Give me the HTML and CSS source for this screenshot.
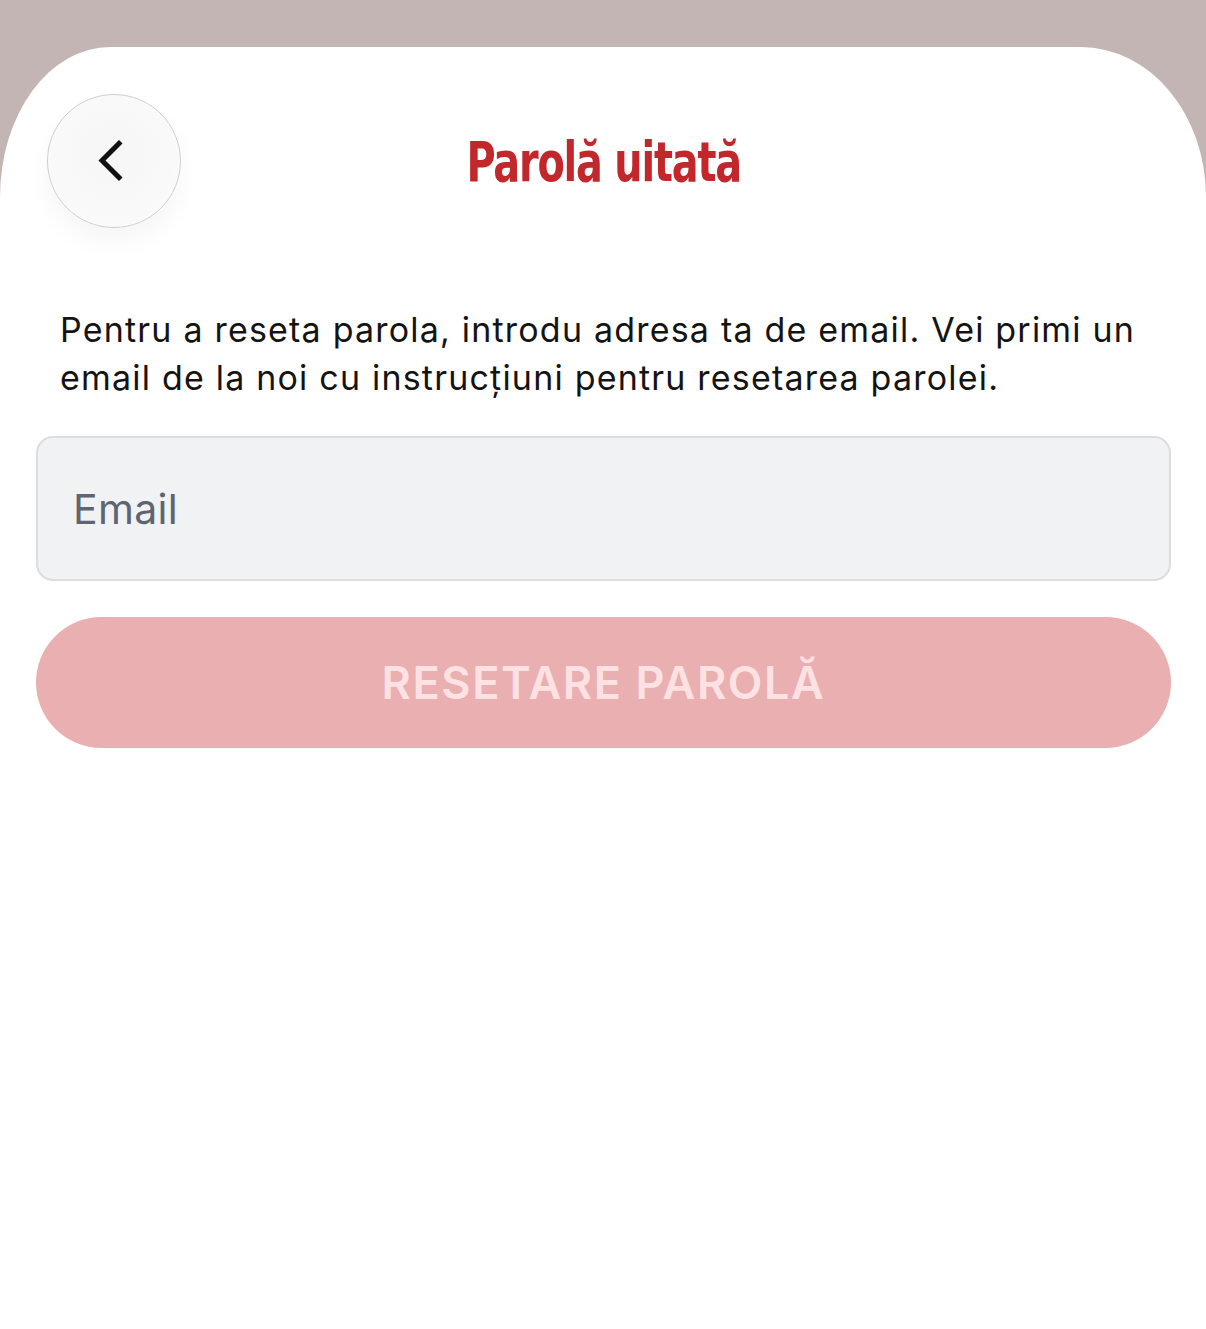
FILE: index.html
```html
<!DOCTYPE html>
<html lang="ro">
<head>
    <meta charset="UTF-8">
    <meta name="viewport" content="width=device-width, initial-scale=1.0">
    <title>Parolă uitată</title>
    <link rel="stylesheet" href="styles.css">
</head>
<body>

    <div class="sheet">
        <div class="sheet-header">
            <button class="back-btn" aria-label="Înapoi">
                <svg width="30" height="42" viewBox="0 0 30 42">
                    <path d="M23 3.5 L6 20.5 L23 37.5" fill="none" stroke="#111" stroke-width="5" stroke-linecap="square"/>
                </svg>
            </button>
            <h1 class="title">Parolă uitată</h1>
        </div>

        <p class="intro">Pentru a reseta parola, introdu adresa ta de email. Vei primi un email de la noi cu instrucțiuni pentru resetarea parolei.</p>

        <input class="email-input" type="email" placeholder="Email">

        <button class="reset-btn" disabled>RESETARE PAROLĂ</button>
    </div>

</body>
</html>
```

FILE: styles.css
```css
html, body {
    margin: 0;
    padding: 0;
}
body {
    background-color: #c4b5b5;
    font-family: Inter, "Noto Sans", sans-serif;
    padding-top: 47px;
}
.sheet {
    background: #fff;
    min-height: 1282px;
    border-radius: 110px 125px 0 0 / 150px 150px 0 0;
    padding: 47px 35px 0 36px;
    box-sizing: border-box;
}
.sheet-header {
    position: relative;
    height: 134px;
    display: flex;
    align-items: center;
    justify-content: center;
}
.back-btn {
    position: absolute;
    left: 11px;
    top: 0;
    width: 134px;
    height: 134px;
    border-radius: 50%;
    border: 1px solid #cfcfcf;
    background: radial-gradient(circle at 50% 45%, #f6f6f6 0%, #f9f9f9 60%, #fdfdfd 100%);
    box-shadow: 0 14px 24px rgba(0, 0, 0, 0.04);
    display: flex;
    align-items: center;
    justify-content: center;
    padding: 0 6px 0 0;
    cursor: pointer;
}
.title {
    margin: 0;
    font-family: "Liberation Sans Narrow", "DejaVu Sans Condensed", "Liberation Sans", sans-serif;
    font-stretch: condensed;
    font-weight: bold;
    font-size: 56px;
    letter-spacing: -1.5px;
    color: #c2272b;
    transform: scaleX(0.79);
    padding-left: 0;
}
.intro {
    margin: 78px 0 0 24px;
    font-size: 34px;
    line-height: 48px;
    letter-spacing: 1.2px;
    color: #141414;
}
.email-input {
    display: block;
    width: 100%;
    height: 145px;
    margin-top: 34px;
    box-sizing: border-box;
    border: 2.5px solid #dcdde0;
    border-radius: 17px;
    background: #f1f2f4;
    padding: 0 0 0 35px;
    font-family: Inter, "Noto Sans", sans-serif;
    font-size: 41px;
    letter-spacing: 0.3px;
    color: #222;
    outline: none;
}
.email-input::placeholder {
    color: #5d6571;
}
.reset-btn {
    display: block;
    width: 100%;
    height: 131px;
    margin-top: 36px;
    border: none;
    border-radius: 66px;
    background: #eaafb0;
    color: #fde1e3;
    font-family: Inter, "Noto Sans", sans-serif;
    font-weight: 600;
    font-size: 45px;
    letter-spacing: 1.6px;
}
```
